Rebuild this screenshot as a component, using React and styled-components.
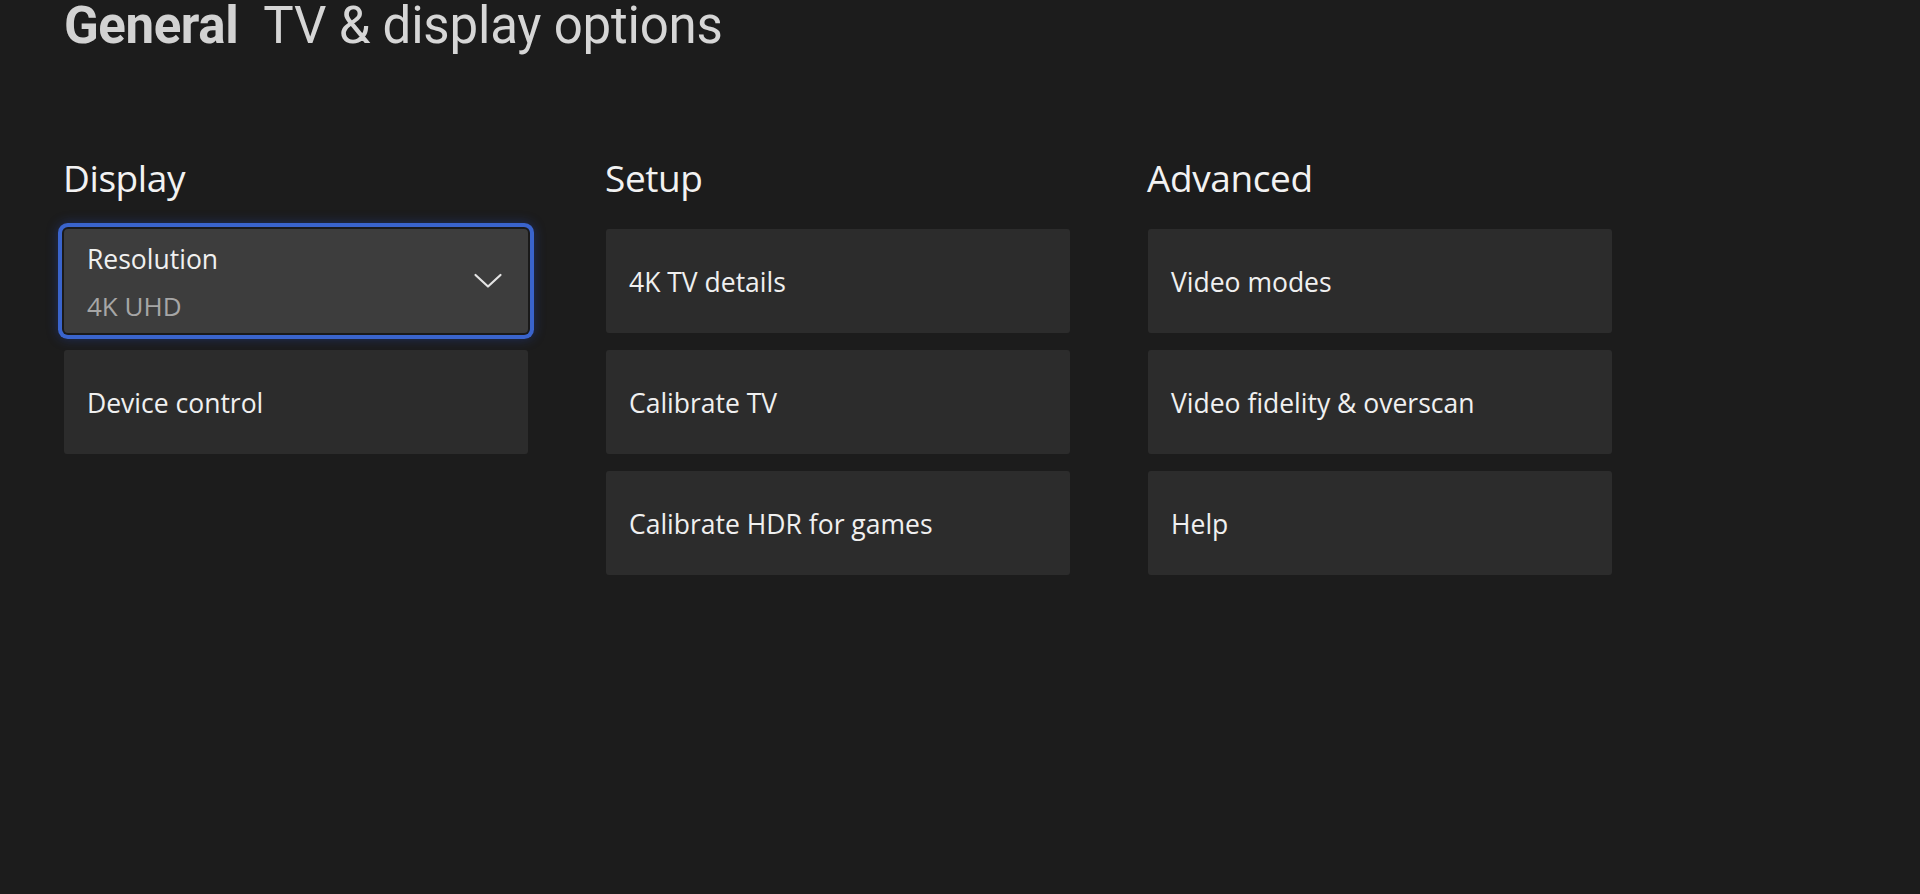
import React from 'react'
import styled, { createGlobalStyle } from 'styled-components'

const GlobalStyle = createGlobalStyle`
    html, body {
        margin: 0;
        padding: 0;
        background: #1c1c1c;
    }
    body {
        width: 1920px;
        height: 894px;
        overflow: hidden;
        font-family: "Open Sans", "Noto Sans", sans-serif;
        color: #f0f0f0;
    }
`

const Page = styled.div`
    width: 1920px;
    height: 894px;
    padding: 1px 0 0 64px;
    box-sizing: border-box;
    background: #1c1c1c;
`

const Title = styled.h1`
    margin: 0;
    font-family: Roboto, "DejaVu Sans", sans-serif;
    font-size: 51px;
    line-height: 50px;
    font-weight: 400;
    color: #d6d6d6;
    letter-spacing: -0.2px;

    b {
        font-weight: 700;
        color: #d2d2d2;
        margin-right: 25px;
        letter-spacing: -0.4px;
    }
`

const Columns = styled.div`
    display: grid;
    grid-template-columns: repeat(3, 464px);
    column-gap: 78px;
    margin-top: 109px;
`

const Column = styled.section`
    display: flex;
    flex-direction: column;
`

const Heading = styled.h2`
    margin: 0 0 33px -1px;
    font-size: 37px;
    line-height: 36px;
    font-weight: 400;
    letter-spacing: -0.4px;
    color: #f2f2f2;
`

const List = styled.div`
    display: flex;
    flex-direction: column;
    gap: 17px;
`

const Card = styled.div`
    height: 104px;
    box-sizing: border-box;
    padding: 0 25px 0 23px;
    display: flex;
    align-items: center;
    justify-content: space-between;
    background: ${p => (p.$focused ? '#3d3d3d' : '#2c2c2c')};
    box-shadow: ${p =>
        p.$focused
            ? '0 0 0 2px #1a1a1a, 0 0 0 6px #3a64cc, 0 0 12px 6px rgba(40, 80, 210, 0.35)'
            : 'none'};
    border-radius: ${p => (p.$focused ? '4px' : '3px')};
`

const Label = styled.div`
    display: flex;
    flex-direction: column;
    gap: 15px;
    padding-top: 2px;
`

const Name = styled.span`
    font-size: 26.5px;
    line-height: 32px;
    color: #f0f0f0;
`

const Value = styled.span`
    font-size: 26px;
    line-height: 32px;
    color: #a6a6a6;
`

const Chevron = () => (
    <svg width="30" height="16" viewBox="0 0 30 16" fill="none">
        <path d="M2.5 2 L15 13.5 L27.5 2" stroke="#e4e4e4" strokeWidth="2.2" strokeLinecap="round" strokeLinejoin="round" />
    </svg>
)

const columns = [
    {
        title: 'Display',
        items: [
            { name: 'Resolution', value: '4K UHD', focused: true },
            { name: 'Device control' },
        ],
    },
    {
        title: 'Setup',
        items: [
            { name: '4K TV details' },
            { name: 'Calibrate TV' },
            { name: 'Calibrate HDR for games' },
        ],
    },
    {
        title: 'Advanced',
        items: [
            { name: 'Video modes' },
            { name: 'Video fidelity & overscan' },
            { name: 'Help' },
        ],
    },
]

export default function App() {
    return (
        <Page>
            <GlobalStyle />
            <Title>
                <b>General</b>TV &amp; display options
            </Title>

            <Columns>
                {columns.map(col => (
                    <Column key={col.title}>
                        <Heading>{col.title}</Heading>
                        <List>
                            {col.items.map(item => (
                                <Card key={item.name} $focused={item.focused}>
                                    <Label>
                                        <Name>{item.name}</Name>
                                        {item.value && <Value>{item.value}</Value>}
                                    </Label>
                                    {/* dropdown marker only on the resolution picker */}
                                    {item.value && <Chevron />}
                                </Card>
                            ))}
                        </List>
                    </Column>
                ))}
            </Columns>
        </Page>
    )
}
